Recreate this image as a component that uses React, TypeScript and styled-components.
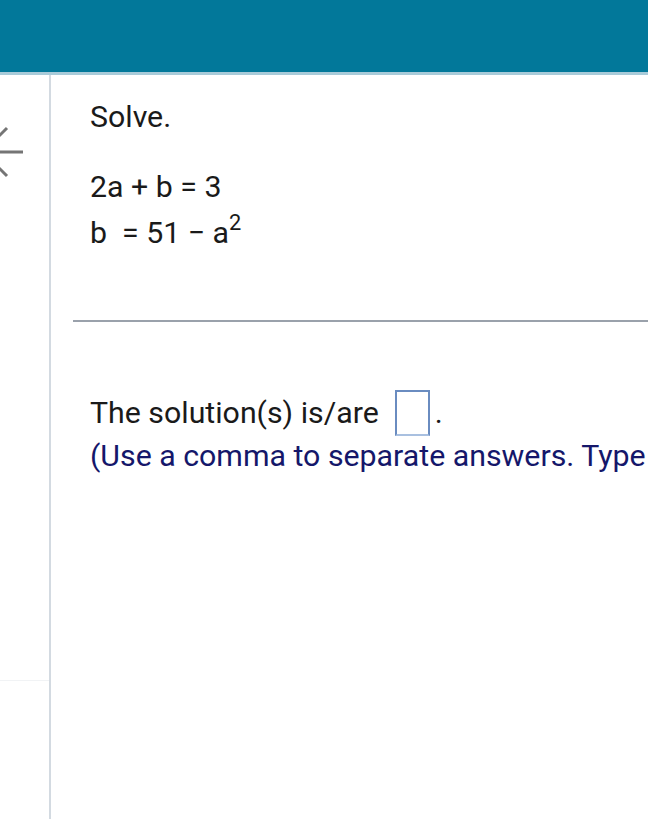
import styled, { createGlobalStyle } from 'styled-components';

const GlobalStyle = createGlobalStyle`
  html, body {
    margin: 0;
    padding: 0;
    background: #ffffff;
    overflow: hidden;
  }
  body {
    font-family: Roboto, 'Liberation Sans', Arial, sans-serif;
  }
`;

const Page = styled.div`
  display: flex;
  flex-direction: column;
  width: 648px;
  height: 819px;
  overflow: hidden;
`;

const TopBar = styled.header`
  height: 72px;
  flex-shrink: 0;
  background-color: #02789a;
  border-bottom: 3px solid #a9cbd9;
`;

const Body = styled.div`
  display: flex;
  flex: 1;
  min-height: 0;
`;

const SideRail = styled.aside`
  position: relative;
  width: 49px;
  flex-shrink: 0;
  border-right: 2px solid #d3dae1;
  overflow: hidden;

  &::after {
    content: '';
    position: absolute;
    left: 0;
    right: 0;
    top: 605px;
    border-top: 1px solid #f1f3f5;
  }
`;

const BackArrow = styled.svg`
  position: absolute;
  left: -20px;
  top: 50px;
`;

const Content = styled.main`
  flex: 1;
  min-width: 0;
  padding-top: 24px;
  color: #1a1a1a;
  font-size: 30.3px;
  line-height: 1.2;
  overflow: hidden;
`;

const Indent = styled.div`
  padding-left: 39px;
`;

const Heading = styled.p`
  margin: 0;
`;

const Equations = styled.div`
  margin-top: 29px;
  line-height: 46px;
  white-space: pre;
`;

const Sup = styled.sup`
  font-size: 0.72em;
  line-height: 0;
  vertical-align: 0.6em;
`;

const Rule = styled.hr`
  margin: 64px 0 0 22px;
  border: none;
  border-top: 2px solid #9aa1ab;
`;

const AnswerRow = styled.div`
  display: flex;
  align-items: center;
  margin-top: 68px;
  white-space: nowrap;
`;

const AnswerBox = styled.span`
  display: inline-block;
  box-sizing: border-box;
  width: 35px;
  height: 46px;
  margin: 0 5px 0 16px;
  border: 2px solid #6a8cc0;
  border-bottom-color: #a9c0e0;
  background: #ffffff;
`;

const Hint = styled.p`
  margin: 2px 0 0 0;
  color: #15176a;
  white-space: nowrap;
`;

export default function App() {
  return (
    <Page>
      <GlobalStyle />
      <TopBar />
      <Body>
        <SideRail>
          <BackArrow width="50" height="56" viewBox="0 0 50 56">
            <path
              d="M3 27 H43 M3 27 L27 3 M3 27 L27 51"
              stroke="#757575"
              strokeWidth="3"
              fill="none"
            />
          </BackArrow>
        </SideRail>
        <Content>
          <Indent>
            <Heading>Solve.</Heading>
            <Equations>
              <div>2a + b = 3</div>
              <div>
                b  = 51 − a<Sup>2</Sup>
              </div>
            </Equations>
          </Indent>
          <Rule />
          <Indent>
            <AnswerRow>
              The solution(s) is/are<AnswerBox />.
            </AnswerRow>
            <Hint>(Use a comma to separate answers. Type an integer or a simplified fraction.)</Hint>
          </Indent>
        </Content>
      </Body>
    </Page>
  );
}
